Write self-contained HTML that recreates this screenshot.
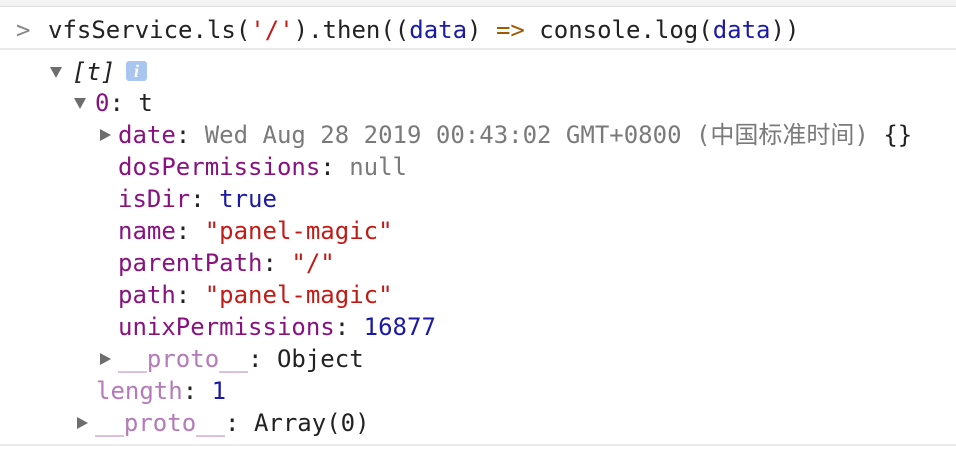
<!DOCTYPE html>
<html><head><meta charset="utf-8"><style>
body{margin:0;width:956px;height:452px;background:#fff;overflow:hidden;font-family:"DejaVu Sans Mono","Liberation Mono","Noto Sans CJK SC",monospace;font-size:24px;color:#222;}
.top{position:absolute;left:0;top:0;width:956px;height:6px;background:#f3f3f3;border-bottom:1px solid #dcdcdc;}
.sep{position:absolute;left:0;width:956px;border-top:2px solid #eaeaea;}
.l{position:absolute;white-space:pre;line-height:32px;height:32px;}
.k{color:#881280}.p{color:#b57ab9}.g{color:#7a7a7a}.b{color:#1a1aa6}.s{color:#c41a16}
.tri{position:absolute;width:0;height:0;}
.down{border-left:6px solid transparent;border-right:6px solid transparent;border-top:11px solid #6e6e6e;}
.right{border-top:6px solid transparent;border-bottom:6px solid transparent;border-left:11px solid #6e6e6e;}
</style></head><body>
<div class="top"></div>
<div class="l" style="left:16px;top:14px;color:#888;font-size:24px">&gt;</div>
<div class="l" style="left:48px;top:14px">vfsService.ls(<span class="s">'/'</span>).then((<span class="b">data</span>) <span style="color:#a05a00">=&gt;</span> console.log(<span class="b">data</span>))</div>
<div class="sep" style="top:48px"></div>
<div class="tri down" style="left:50px;top:67px"></div>
<div class="l" style="left:72px;top:56px;font-style:italic">[t]</div>
<div style="position:absolute;left:126px;top:61px;width:21px;height:20px;background:#a9c5f0;border-radius:3px;color:#fff;font:italic bold 18px 'Liberation Serif',serif;text-align:center;line-height:20px">i</div>
<div class="tri down" style="left:74px;top:98px"></div>
<div class="l" style="left:95px;top:87px"><span class="k">0</span>: t</div>
<div class="tri right" style="left:100px;top:129px"></div>
<div class="l" style="left:118px;top:119px"><span class="k">date</span>: <span class="g">Wed Aug 28 2019 00:43:02 GMT+0800 (中国标准时间)</span> {}</div>
<div class="l" style="left:118px;top:151px"><span class="k">dosPermissions</span>: <span class="g">null</span></div>
<div class="l" style="left:118px;top:183px"><span class="k">isDir</span>: <span class="b">true</span></div>
<div class="l" style="left:118px;top:215px"><span class="k">name</span>: <span class="s">"panel-magic"</span></div>
<div class="l" style="left:118px;top:247px"><span class="k">parentPath</span>: <span class="s">"/"</span></div>
<div class="l" style="left:118px;top:279px"><span class="k">path</span>: <span class="s">"panel-magic"</span></div>
<div class="l" style="left:118px;top:311px"><span class="k">unixPermissions</span>: <span class="b">16877</span></div>
<div class="tri right" style="left:100px;top:353px"></div>
<div class="l" style="left:118px;top:343px"><span class="p">__proto__</span>: Object</div>
<div class="l" style="left:96px;top:375px"><span class="p">length</span>: <span class="b">1</span></div>
<div class="tri right" style="left:77px;top:417px"></div>
<div class="l" style="left:95px;top:407px"><span class="p">__proto__</span>: Array(0)</div>
<div class="sep" style="top:444px"></div>
</body></html>
